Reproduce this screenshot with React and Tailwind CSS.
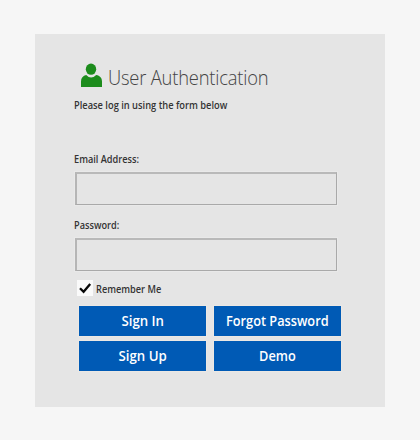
function Field({ label, type, id, className }) {
  return (
    <div className={className}>
      <label htmlFor={id} className="block h-[14px] w-max origin-left scale-x-[0.92] whitespace-nowrap text-[10px] leading-[14px] font-semibold text-[#343434]">
        {label}
      </label>
      <input
        id={id}
        type={type}
        className="mt-[6px] ml-px block h-[33px] w-[262px] appearance-none border border-t-2 border-l-2 border-solid border-t-[#b9b9b9] border-r-[#a9a9a9] border-b-[#a9a9a9] border-l-[#b5b5b5] bg-transparent px-2 text-[12px] outline-1 outline-[#e9e9e9]"
      />
    </div>
  );
}

function Button({ children, narrow }) {
  return (
    <button type="button" className="h-[30px] bg-[#005ab5] text-center text-[13.5px] leading-[30px] font-semibold whitespace-nowrap text-white outline-1 outline-[#ebe8e4]">
      <span className={narrow ? "inline-block scale-x-[0.945]" : "inline-block scale-x-[0.98]"}>{children}</span>
    </button>
  );
}

export default function App() {
  return (
    <main className="h-[440px] w-[420px] bg-[#f6f6f6] px-[35px] pt-[34px] font-['Open_Sans','Noto_Sans',sans-serif]">
      <section className="flex h-[373px] w-[350px] flex-col bg-[#e5e5e5] pt-[29px] pl-[39px]">
        <header className="flex h-[28px] pl-[7px]">
          <svg width="21" height="24" viewBox="0 0 21 24" className="shrink-0" fill="#1c8c1c" aria-hidden="true">
            <ellipse cx="10" cy="6.2" rx="5.2" ry="5.6" />
            <path d="M0 24V18.5C0 14.8 2 12.8 5.2 12Q10 17 15.2 12C19 12.8 21 14.8 21 18.5V24Z" />
          </svg>
          <h1 className="ml-[5.5px] w-max origin-left scale-x-[0.94] pt-px text-[19.5px] leading-[28px] font-light tracking-[-0.2px] whitespace-nowrap text-[#444]">
            User Authentication
          </h1>
        </header>
        <p className="mt-[7px] h-[14px] w-max origin-left scale-x-[0.93] text-[10px] leading-[14px] font-semibold text-[#343434]">
          Please log in using the form below
        </p>
        <Field label="Email Address:" type="text" id="email" className="mt-[40px]" />
        <Field label="Password:" type="password" id="password" className="mt-[13px]" />
        <div className="mt-[9px] ml-[3px] flex h-[16px] items-center">
          <span role="checkbox" aria-checked="true" aria-label="Remember Me" className="size-4 bg-[#fafafa]">
            <svg width="16" height="16" viewBox="0 0 16 16" fill="none" stroke="#080808" strokeWidth="2.3" aria-hidden="true">
              <path d="M3 8.2L6.6 11.8L13.2 4" />
            </svg>
          </span>
          <span className="ml-[3px] origin-left scale-x-[0.92] pt-[2px] text-[10px] leading-[14px] font-semibold text-[#343434]">Remember Me</span>
        </div>
        <div className="mt-[10px] ml-[5px] grid w-[262px] grid-cols-2 gap-x-[8px] gap-y-[5px]">
          <Button>Sign In</Button>
          <Button narrow>Forgot Password</Button>
          <Button>Sign Up</Button>
          <Button narrow>Demo</Button>
        </div>
      </section>
    </main>
  );
}
